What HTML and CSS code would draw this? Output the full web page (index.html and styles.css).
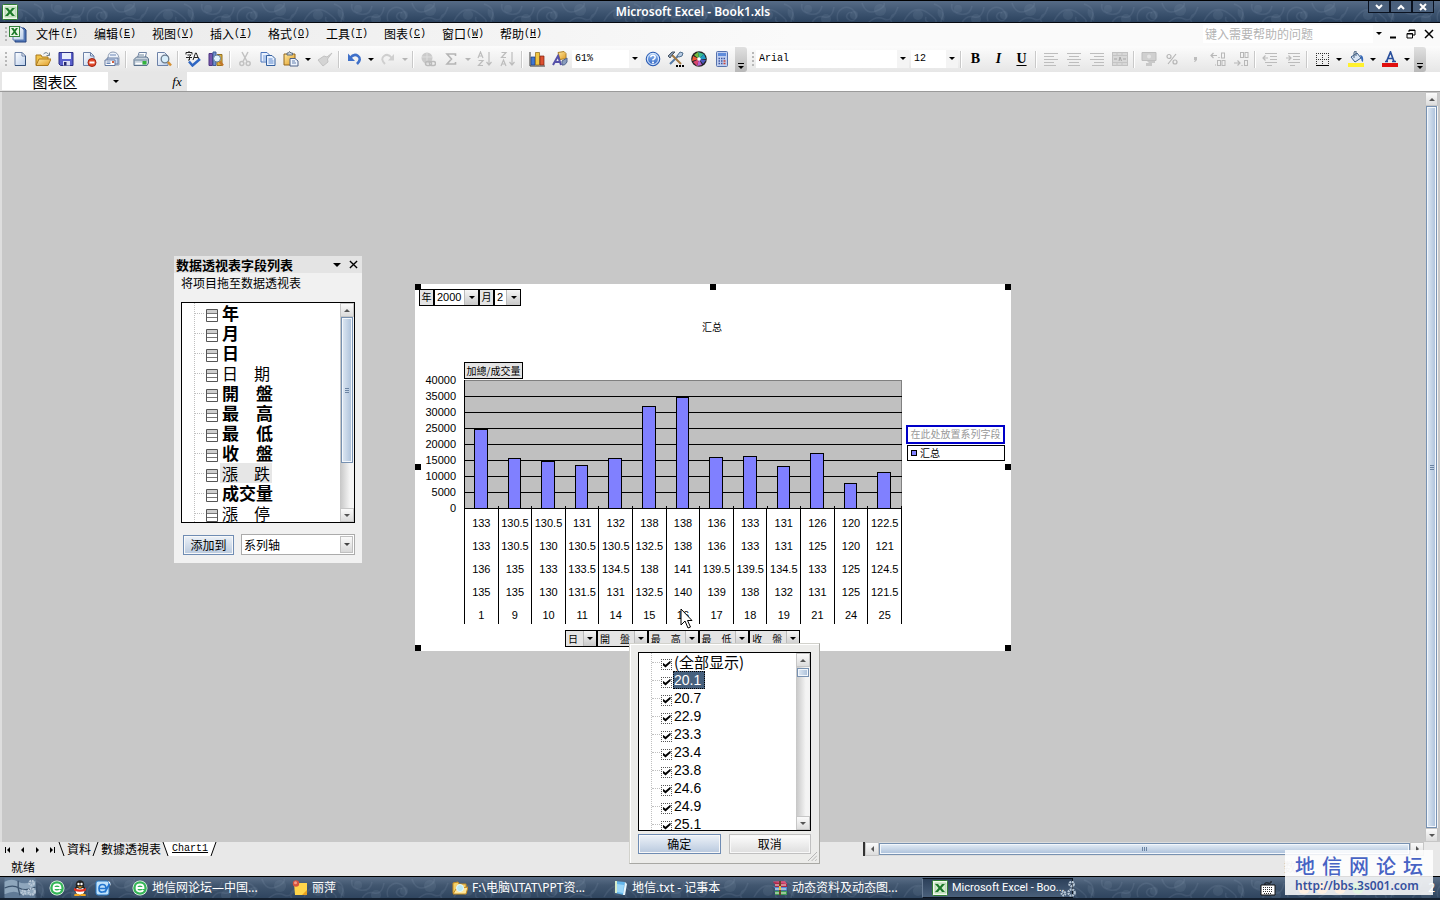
FILE: index.html
```html
<!DOCTYPE html>
<html lang="zh-CN">
<head>
<meta charset="utf-8">
<title>Microsoft Excel - Book1.xls</title>
<link rel="stylesheet" href="styles.css">
</head>
<body>
<svg class="defs" aria-hidden="true">
  <defs>
    <linearGradient id="g-page" x1="0" y1="0" x2="1" y2="1"><stop offset="0" stop-color="#fff"/><stop offset="1" stop-color="#b9cdea"/></linearGradient>
    <linearGradient id="g-gold" x1="0" y1="0" x2="1" y2="1"><stop offset="0" stop-color="#ffe9a0"/><stop offset="1" stop-color="#e09a20"/></linearGradient>
    <linearGradient id="g-blue" x1="0" y1="0" x2="0" y2="1"><stop offset="0" stop-color="#9cc4f5"/><stop offset="1" stop-color="#2a5fc0"/></linearGradient>
    <pattern id="damask" width="150" height="24" patternUnits="userSpaceOnUse">
      <g fill="none" stroke="#a9bbd0" stroke-opacity=".12" stroke-width="1.5">
        <path d="M4 20q10-18 24-8t4 10q-8 0-6-6M34 3q12 4 8 14t8 6M52 3q-2 8 8 10t12-8M62 22q4-8 12-6t10-10M88 20c-4-12 10-18 16-10s-2 12-6 8 2-8 4-6M112 2q4 12 14 8t8-8M118 22q8-8 16-4t14-12M142 22q-4-6 4-10"/>
      </g>
      <g fill="#a9bbd0" fill-opacity=".1"><circle cx="18" cy="14" r="5"/><circle cx="58" cy="8" r="4"/><circle cx="76" cy="18" r="5"/><circle cx="104" cy="14" r="4"/><circle cx="130" cy="9" r="6"/><path d="M38 8q8 2 6 12q-8-4-6-12z"/></g>
    </pattern>
    <symbol id="excel" viewBox="0 0 16 16"><rect x=".5" y=".5" width="15" height="15" rx="1" fill="#f2faee" stroke="#2f7d32"/><rect x="3" y="3" width="11" height="10" fill="#d5ecd0" stroke="#8abb86" stroke-width=".6"/><path d="M3 4h3l2 2.500 2-2.500h3L9.500 8l3.500 4h-3L8 9.500 6 12H3l3.500-4z" fill="#1d7a2a"/></symbol>
    <symbol id="xlbook" viewBox="0 0 18 18"><path d="M6 3h9l2 2v12H6z" fill="#4f79bd" stroke="#27427c"/><path d="M4 2h8l3 3v10H4z" fill="url(#g-page)" stroke="#5b79ae"/><rect x=".5" y="1.500" width="10" height="10" fill="#e9f6e3" stroke="#35823a"/><path d="M2 3h2.500l1 1.800L7 3h2L6.600 6.400 9 10H6.700L5.400 8 4 10H2l2.500-3.600z" fill="#1d7a2a"/></symbol>
    <symbol id="new" viewBox="0 0 16 16"><path d="M3 1.500h7l3.500 3.500v9.500H3z" fill="url(#g-page)" stroke="#6d82a8"/><path d="M10 1.500V5h3.500z" fill="#fff" stroke="#6d82a8"/><path d="M13.500 5v9.500H3" fill="none" stroke="#33507c"/></symbol>
    <symbol id="open" viewBox="0 0 16 16"><path d="M1 14V4h5l1 2h6v3" fill="#f1c34a" stroke="#a9781d"/><path d="M1 14.500 4 8h12l-3 6.500z" fill="url(#g-gold)" stroke="#a9781d"/><path d="M8.500 3q3-3 5 .5M14.500 1.500v3h-3" fill="none" stroke="#6f8190"/></symbol>
    <symbol id="save" viewBox="0 0 16 16"><path d="M1 1.500h14v13H2.500L1 13z" fill="#5a60cc" stroke="#2b2f85"/><rect x="4" y="2" width="9" height="6" fill="#e8edfb"/><rect x="5" y="10" width="7" height="4.500" fill="#dcdff5"/><rect x="6" y="11" width="2.500" height="3.500" fill="#26286e"/></symbol>
    <symbol id="perm" viewBox="0 0 16 16"><path d="M2.500 1.500h7L13 5v9.500H2.500z" fill="url(#g-page)" stroke="#6d82a8"/><path d="M9.500 1.500V5H13" fill="none" stroke="#6d82a8"/><circle cx="11" cy="11.500" r="4" fill="#e2492a" stroke="#a32310"/><path d="M8.500 11.500h5" stroke="#fff" stroke-width="2"/></symbol>
    <symbol id="mail" viewBox="0 0 16 16"><path d="M4 7q0-6 5-6t6 6v7H4z" fill="#eef3fb" stroke="#8d9bb3"/><path d="M3 7h11v6H3z" fill="#c8d7f1" stroke="#6b7ea1"/><path d="M1 9h10v5.500H1z" fill="#fff" stroke="#60779f"/><path d="M2.500 11h4M2.500 12.500h4M6 4h6" stroke="#6c87b5"/><rect x="8" y="10" width="2" height="2" fill="#d06040"/></symbol>
    <symbol id="print" viewBox="0 0 16 16"><path d="M4.500 7 6 1.500h7.500L12 7z" fill="#fff" stroke="#7185a5"/><path d="M1 8.500 3.500 6H14l1.500 2v4L14 14.500H1z" fill="#c9d3dd" stroke="#59708b"/><path d="M1.500 9h13M6 4h5" stroke="#6d859b"/><path d="M2.500 12.500h7" stroke="#fff" stroke-width="1.500"/><rect x="9.500" y="10" width="4" height="3.500" fill="#32b33c"/></symbol>
    <symbol id="preview" viewBox="0 0 16 16"><path d="M1.500 1.500h7L12 5v9.500H1.500z" fill="url(#g-page)" stroke="#6d82a8"/><circle cx="9" cy="8" r="3.800" fill="#d8eefb" stroke="#6b7c8d" stroke-width="1.300"/><path d="m12 11 3 3.500" stroke="#d59135" stroke-width="2.500"/></symbol>
    <symbol id="spell" viewBox="0 0 16 16"><path d="M1 1.500h6M4 0v2M1 1.500v2M7 1.500v2M2.500 4H6L4.500 5.500V9H3M1 6.500h6M8 9l2.500-7h.8L14 9M9 6.500h4.500" fill="none" stroke="#222"/><path d="m4 10.500 3.500 4L15 8" fill="none" stroke="#2f66c2" stroke-width="2.500"/></symbol>
    <symbol id="research" viewBox="0 0 16 16"><path d="M1 2.500h3.500v12H1z" fill="#7656ad" stroke="#4d3580"/><path d="M5 1h3v13.500H5z" fill="#7191ce" stroke="#3c5c99"/><path d="M9 3.500h5v11H9z" fill="#deb13c" stroke="#957020"/><circle cx="9" cy="7.500" r="3.500" fill="#dff2fd" stroke="#66809a"/><path d="m11.500 10.500 3.500 4" stroke="#c2772a" stroke-width="2.400"/></symbol>
    <symbol id="cut" viewBox="0 0 16 16"><path d="M5 1l5 9.500M11 1 6 10.500" stroke="#c2c2c2" stroke-width="1.500"/><circle cx="4.800" cy="12.500" r="2" fill="none" stroke="#c2c2c2" stroke-width="1.500"/><circle cx="11.200" cy="12.500" r="2" fill="none" stroke="#c2c2c2" stroke-width="1.500"/></symbol>
    <symbol id="copy" viewBox="0 0 16 16"><path d="M1 1.500h6l2.500 2.500v7H1z" fill="#e9f1fd" stroke="#4c76bd"/><path d="M3 5h4M3 7h4M3 9h4" stroke="#7ba0dc"/><path d="M6.500 4.500h5.500L15 7.500v7H6.500z" fill="#e9f1fd" stroke="#34609f"/><path d="M8.500 8h4M8.500 10h5M8.500 12h5" stroke="#5b87cc"/></symbol>
    <symbol id="paste" viewBox="0 0 16 16"><path d="M1 3h11v11H1z" fill="url(#g-gold)" stroke="#94661b"/><path d="M4 4V2h1.500L6.500.5 8 2h1.500v2z" fill="#ced6e0" stroke="#5f6e7e"/><path d="M7 7.500h5l3 2.500v5H7z" fill="#edf3fc" stroke="#4f6288"/><path d="M9 10h3M9 12h4" stroke="#6682b0"/></symbol>
    <symbol id="brush" viewBox="0 0 16 16"><path d="m15 2-5 4-3-1-6 4 5 6 5-4-.5-3z" fill="#d4d4d4" stroke="#c2c2c2"/></symbol>
    <symbol id="undo" viewBox="0 0 16 16"><path d="M4 7q4-5 8-2t-1 8" fill="none" stroke="#3f70c9" stroke-width="2.600"/><path d="M2 2.500V10h7z" fill="#3f70c9"/></symbol>
    <symbol id="redo" viewBox="0 0 16 16"><path d="M12 7q-4-5-8-2t1 8" fill="none" stroke="#cfcfcf" stroke-width="2"/><path d="M14 3v6.500H8z" fill="#cfcfcf"/></symbol>
    <symbol id="link" viewBox="0 0 16 16"><circle cx="7" cy="7" r="5.500" fill="#cbcbcb"/><path d="M2 6h10M7 2v10" stroke="#dedede"/><rect x="5.500" y="10.500" width="6" height="4" rx="2" fill="none" stroke="#bbb" stroke-width="1.500"/><rect x="9.500" y="10.500" width="6" height="4" rx="2" fill="none" stroke="#bbb" stroke-width="1.500"/></symbol>
    <symbol id="sum" viewBox="0 0 16 16"><path d="M12.500 5V3H4l4.500 5L4 13h8.500v-2" fill="none" stroke="#b5b5b5" stroke-width="1.600"/></symbol>
    <symbol id="sort" viewBox="0 0 16 16"><path d="m1 7 2.500-6L6 7M2 5h3M1.500 9.500H6l-4.500 5H6M12 1v12M9.500 11l2.500 3 2.500-3" fill="none" stroke="#bdbdbd" stroke-width="1.200"/></symbol>
    <symbol id="sortd" viewBox="0 0 16 16"><path d="M1.500 1.500H6l-4.500 5H6M1 15l2.500-6L6 15M2 13h3M12 1v12M9.500 11l2.500 3 2.500-3" fill="none" stroke="#bdbdbd" stroke-width="1.200"/></symbol>
    <symbol id="chart" viewBox="0 0 16 16"><path d="M1 1v14h15" fill="none" stroke="#333"/><path d="M2 6h4v8H2z" fill="#4077cf" stroke="#1d3c80" stroke-width=".7"/><path d="M6.500 1.500h4V14h-4z" fill="#f0c642" stroke="#8c6410" stroke-width=".7"/><path d="M11 5h4v9h-4z" fill="#dc5030" stroke="#7d200e" stroke-width=".7"/></symbol>
    <symbol id="draw" viewBox="0 0 16 16"><path d="m6 1.500 6-1 2 2v5l-6 1z" fill="url(#g-gold)" stroke="#ad802a"/><path d="m10 10 5-3v4q-2 4-5 3z" fill="#8a9cbd" stroke="#50648c"/><path d="m1 14 5-9 3 9M3 11h5" fill="none" stroke="#5550a8" stroke-width="2"/></symbol>
    <symbol id="help" viewBox="0 0 16 16"><circle cx="8" cy="8" r="6.800" fill="url(#g-blue)" stroke="#2a5ab0"/><circle cx="8" cy="8" r="5.500" fill="none" stroke="#e5f0ff"/><path d="M5.700 6.300q.2-2 2.300-2t2.200 1.800T8 8.800v.7" fill="none" stroke="#fff" stroke-width="1.500"/><circle cx="8" cy="11.500" r="1" fill="#fff"/></symbol>
    <symbol id="tools" viewBox="0 0 16 16"><path d="m2 13 10-10" stroke="#557ba8" stroke-width="2"/><path d="m9 5 3-4 3 1-1 3-3 1z" fill="#b9cce3" stroke="#52708f"/><path d="m4 4 9 9" stroke="#a07843" stroke-width="2"/><path d="m0 5 4-4h3L4 4 2 7z" fill="#8a9aae" stroke="#4a5767"/><path d="M8 15h2M11 15h2M14 15h2" stroke="#000" stroke-width="2"/></symbol>
    <symbol id="wheel" viewBox="0 0 16 16"><circle cx="8" cy="8" r="7.800" fill="#222"/><path d="M8 8 7 1l6 2z" fill="#39bd92"/><path d="m8 8 5-5 2 5z" fill="#219bc5"/><path d="m8 8 7 1-3 4z" fill="#4d58bd"/><path d="m8 8 3 6-5 1z" fill="#b65fca"/><path d="m8 8-2 7-4-4z" fill="#db446e"/><path d="M8 8 1 10l1-5z" fill="#ef5934"/><path d="M8 8 3 4l4-3z" fill="#77ba3c"/><circle cx="8" cy="8" r="1.800" fill="#fff"/></symbol>
    <symbol id="calc" viewBox="0 0 16 16"><rect x="2.500" y=".5" width="11" height="15" rx="1" fill="#c0cff0" stroke="#5672ad"/><rect x="4" y="2" width="8" height="3" fill="#5f8cdb"/><path d="M4.500 7.500h2M7 7.500h2M9.500 7.500h2M4.500 10h2M7 10h2M4.500 12.500h2M7 12.500h2" stroke="#3e57a1" stroke-width="1.500" stroke-dasharray="1.500 .5"/><path d="M9.500 10h2M9.500 12.500h2" stroke="#c84337" stroke-width="1.500"/></symbol>
    <symbol id="al" viewBox="0 0 16 16"><path d="M1 2.500h14M1 5.500h10M1 8.500h14M1 11.500h10M1 14.500h12" stroke="#bdbdbd"/></symbol>
    <symbol id="ac" viewBox="0 0 16 16"><path d="M1 2.500h14M3 5.500h10M1 8.500h14M3 11.500h10M2 14.500h12" stroke="#bdbdbd"/></symbol>
    <symbol id="ar" viewBox="0 0 16 16"><path d="M1 2.500h14M5 5.500h10M1 8.500h14M5 11.500h10M3 14.500h12" stroke="#bdbdbd"/></symbol>
    <symbol id="merge" viewBox="0 0 16 16"><rect x=".5" y="1.500" width="15" height="13" fill="#d8d8d8" stroke="#c2c2c2"/><path d="M1 4.500h14M1 11.500h14M5 1v3M10 1v3M5 12v3M10 12v3" stroke="#c4c4c4"/><path d="M2 8h3M11 8h3M7 10l1-4 1.500 4" stroke="#a5a5a5" fill="none"/></symbol>
    <symbol id="money" viewBox="0 0 16 16"><path d="M1 1.500h14v8H1z" fill="#d0d0d0" stroke="#bebebe"/><circle cx="8" cy="5.500" r="2" fill="#e5e5e5"/><path d="M6 10h8v2H8zM5 12h6v3H5z" fill="#c8c8c8"/></symbol>
    <symbol id="pct" viewBox="0 0 16 16"><path d="M12 3 4 13" stroke="#b5b5b5" stroke-width="1.200"/><circle cx="5" cy="5.500" r="2" fill="none" stroke="#b5b5b5" stroke-width="1.200"/><circle cx="11" cy="11" r="2" fill="none" stroke="#b5b5b5" stroke-width="1.200"/></symbol>
    <symbol id="comma" viewBox="0 0 16 16"><path d="M7 6h3v3l-2 2H7l1-2H7z" fill="#bdbdbd"/></symbol>
    <symbol id="incd" viewBox="0 0 16 16"><path d="M1 4.500h6M3.500 2 1 4.500 3.500 7M9 6v1" fill="none" stroke="#b8b8b8" stroke-width="1.200"/><g fill="none" stroke="#b8b8b8"><rect x="11.500" y="2" width="3" height="5"/><rect x="7.500" y="9.500" width="3" height="5"/><rect x="12" y="9.500" width="3" height="5"/></g><path d="M5 14h1" stroke="#b8b8b8"/></symbol>
    <symbol id="decd" viewBox="0 0 16 16"><path d="M1 12h6M4.500 9.500 7 12l-2.500 2.500M9 14v1" fill="none" stroke="#b8b8b8" stroke-width="1.200"/><g fill="none" stroke="#b8b8b8"><rect x="11.500" y="9.500" width="3" height="5"/><rect x="7.500" y="1.500" width="3" height="5"/><rect x="12" y="1.500" width="3" height="5"/></g></symbol>
    <symbol id="outd" viewBox="0 0 16 16"><path d="M3 2.500h12M8 5.500h7M8 8.500h7M3 11.500h12M5 14.500h5M6 7H1M3.500 4.500 1 7l2.500 2.500" fill="none" stroke="#bcbcbc" stroke-width="1.200"/></symbol>
    <symbol id="ind" viewBox="0 0 16 16"><path d="M3 2.500h12M8 5.500h7M8 8.500h7M3 11.500h12M5 14.500h5M1 7h5M3.500 4.500 6 7 3.500 9.500" fill="none" stroke="#bcbcbc" stroke-width="1.200"/></symbol>
    <symbol id="border" viewBox="0 0 16 16"><path d="M2.500 2v12M8.500 2v12M14.500 2v12M2 2.500h13M2 8.500h13" stroke="#333" stroke-dasharray="1 1"/><path d="M2 14.500h13" stroke="#000"/></symbol>
    <symbol id="fill" viewBox="0 0 16 16"><path d="m3 6 6-4 4 5-6 4z" fill="#dbe7f5" stroke="#395b88"/><path d="M6 7V2q0-2 2-2v5" fill="none" stroke="#46617f"/><path d="M12 4q4 0 3 7-2-1-2-4z" fill="#3568b8"/><path d="M0 12h16v4H0z" fill="#fff12e"/></symbol>
    <symbol id="fcolor" viewBox="0 0 16 16"><path d="M3 10.500h3M10 10.500h4M4.500 10.500 8.500 1l3.500 9.500M6 7.500h5" fill="none" stroke="#294f9c" stroke-width="1.700"/><path d="M0 12h16v4H0z" fill="#e01010"/></symbol>
    <symbol id="field" viewBox="0 0 12 13"><path d="M.5.500h11v12H.5z" fill="#fff" stroke="#555"/><path d="M1 1h10v3H1z" fill="#cfcfcf"/><path d="M1 4.500h10M1 8.500h10" stroke="#777"/></symbol>
    <symbol id="ie" viewBox="0 0 16 16"><circle cx="8" cy="8" r="7.500" fill="#eefaf0"/><circle cx="8" cy="8" r="6.800" fill="#35b558"/><path d="M4.500 8h7q0-3.500-3.500-3.500T4.500 8t3.500 3.500q2.500 0 3.200-1.500" fill="none" stroke="#fff" stroke-width="1.800"/></symbol>
    <symbol id="qq" viewBox="0 0 16 16"><ellipse cx="8" cy="10" rx="5.500" ry="5" fill="#222"/><ellipse cx="8" cy="11" rx="4.500" ry="4" fill="#fff"/><circle cx="8" cy="4.500" r="4.300" fill="#222"/><circle cx="6.500" cy="4" r="1.200" fill="#fff"/><circle cx="9.500" cy="4" r="1.200" fill="#fff"/><path d="M5 6.500h6L8 8z" fill="#f3a620"/><path d="M2 8q6 3 12 0v2.500q-6 2.500-12 0z" fill="#e8301f"/><ellipse cx="5" cy="15" rx="3" ry="1.300" fill="#f3a620"/><ellipse cx="11" cy="15" rx="3" ry="1.300" fill="#f3a620"/></symbol>
    <symbol id="desk" viewBox="0 0 16 16"><rect x="1" y="1" width="13" height="14" rx="2" fill="#bfe2fb" stroke="#2675bf"/><path d="M4 8.500h7q0-4-3.500-4T4 8.500 7.500 12q2.500 0 3.500-1.500M10 12l5-9" fill="none" stroke="#2376cf" stroke-width="1.700"/><path d="m13 1 2 1 1 4z" fill="#fff"/></symbol>
    <symbol id="note" viewBox="0 0 16 16"><path d="M2 3h13v12H3z" fill="#ffd54a"/><path d="m10 15 5-5v5z" fill="#e8a020"/><circle cx="4" cy="3.500" r="3.200" fill="#d65440"/><circle cx="3.500" cy="2.800" r="1.500" fill="#f49c86"/></symbol>
    <symbol id="folder" viewBox="0 0 16 16"><path d="M1 13V3l5-1 1 2h7v9z" fill="#f4d169" stroke="#c58d22"/><path d="m1 14 3-5 12-2-2 7z" fill="#ffe79b" stroke="#c58d22"/><circle cx="8" cy="8" r="3.500" fill="#b9e8f1" stroke="#e6f8ff"/></symbol>
    <symbol id="pad" viewBox="0 0 16 16"><path d="m3 1 10 1-1 13-9-2z" fill="#63b5ea"/><path d="m5 4 7 1-1 8-6-1z" fill="#9ad6f8"/><path d="M13 2l2 2-2 11h-2z" fill="#e8f5fb"/><path d="M3 1h2v12H3z" fill="#d5ecc9"/></symbol>
    <symbol id="rar" viewBox="0 0 16 16"><path d="M1 1.500 13 1l2 3H3z" fill="#d8527b"/><path d="M1 2l2 2v3H15V4" fill="#a72649"/><path d="m1 6 2 2v2.500h12V7H3z" fill="#4d8bd8"/><path d="m1 10 2 1.500V15h12v-4H3z" fill="#3f9c55"/><path d="M3 5h11M3 9h11M3 13h11" stroke="#f4f0e0"/><path d="M7 1h2v14H7z" fill="#6b432a"/><path d="M7 6h2v4H7z" fill="#e4bb48"/></symbol>
    <symbol id="gears" viewBox="0 0 20 20"><g fill="none" stroke="#bac9d8" stroke-width="2.500"><circle cx="14" cy="4.500" r="2.500" stroke-dasharray="2 .7"/><circle cx="5" cy="15" r="2" stroke-dasharray="1.600 .7"/><circle cx="14" cy="14" r="3.500" stroke-dasharray="2 .8"/></g></symbol>
    <symbol id="flag" viewBox="0 0 34 22"><path d="M0 0h34v22H0z" fill="#607a96"/><path d="M0 4Q8 0 15 4t19-1v14q-10 4-17 0T0 18z" fill="#8ea6bc"/><path d="M15 3q-1 8 2 16M0 11q9-4 16 0t18-1" fill="none" stroke="#3c536d" stroke-width="1.500"/></symbol>
    <symbol id="kbd" viewBox="0 0 16 16"><path d="M5 5q-1-3 3-2t3-2" fill="none" stroke="#111"/><path d="M1 5h14v10H1z" fill="#fff" stroke="#111"/><path d="M3 7.500h10M3 9.500h10M3 11.500h10M4 13.500h8" stroke="#333" stroke-dasharray="1 1"/></symbol>
  </defs>
</svg>

<header class="titlebar">
  <svg class="texture" aria-hidden="true"><rect width="100%" height="100%" fill="url(#damask)"/></svg>
  <svg class="ico title-ico"><use href="#excel"/></svg>
  <h1 class="title">Microsoft Excel - Book1.xls</h1>
  <div class="winbtns">
    <button aria-label="最小化"><svg viewBox="0 0 8 8"><path d="m1 2 3 3 3-3"/></svg></button>
    <button aria-label="最大化"><svg viewBox="0 0 8 8"><path d="m1 6 3-3 3 3"/></svg></button>
    <button aria-label="关闭"><svg viewBox="0 0 8 8"><path d="m1 1 6 6M7 1 1 7"/></svg></button>
  </div>
</header>

<nav class="menubar">
  <span class="grip"></span>
  <svg class="book-ico"><use href="#xlbook"/></svg>
  <button class="menu">文件<span class="lat">(<u>F</u>)</span></button>
  <button class="menu">编辑<span class="lat">(<u>E</u>)</span></button>
  <button class="menu">视图<span class="lat">(<u>V</u>)</span></button>
  <button class="menu">插入<span class="lat">(<u>I</u>)</span></button>
  <button class="menu">格式<span class="lat">(<u>O</u>)</span></button>
  <button class="menu">工具<span class="lat">(<u>T</u>)</span></button>
  <button class="menu">图表<span class="lat">(<u>C</u>)</span></button>
  <button class="menu">窗口<span class="lat">(<u>W</u>)</span></button>
  <button class="menu">帮助<span class="lat">(<u>H</u>)</span></button>
  <input class="ask" type="text" aria-label="帮助问题" placeholder="键入需要帮助的问题">
  <button class="dd" aria-label="展开"></button>
  <div class="docbtns">
    <button aria-label="最小化窗口"><svg viewBox="0 0 10 10"><path d="M2 8.500h6" stroke-width="2"/></svg></button>
    <button aria-label="还原窗口"><svg viewBox="0 0 10 10"><path d="M3 3V1h6v5H7M1 4.500h5.500v4.500H1zM3 1.500h6M1 5h6"/></svg></button>
    <button aria-label="关闭窗口"><svg viewBox="0 0 10 10"><path d="m1 1 8 8M9 1 1 9" stroke-width="1.500"/></svg></button>
  </div>
</nav>

<div class="toolbar">
  <span class="grip"></span>
  <button class="tb" aria-label="新建"><svg class="ico"><use href="#new"/></svg></button>
  <button class="tb" aria-label="打开"><svg class="ico"><use href="#open"/></svg></button>
  <button class="tb" aria-label="保存"><svg class="ico"><use href="#save"/></svg></button>
  <button class="tb" aria-label="权限"><svg class="ico"><use href="#perm"/></svg></button>
  <button class="tb" aria-label="电子邮件"><svg class="ico"><use href="#mail"/></svg></button>
  <span class="sep"></span>
  <button class="tb" aria-label="打印"><svg class="ico"><use href="#print"/></svg></button>
  <button class="tb" aria-label="打印预览"><svg class="ico"><use href="#preview"/></svg></button>
  <span class="sep"></span>
  <button class="tb" aria-label="拼写检查"><svg class="ico"><use href="#spell"/></svg></button>
  <button class="tb" aria-label="信息检索"><svg class="ico"><use href="#research"/></svg></button>
  <span class="sep"></span>
  <button class="tb" aria-label="剪切"><svg class="ico"><use href="#cut"/></svg></button>
  <button class="tb" aria-label="复制"><svg class="ico"><use href="#copy"/></svg></button>
  <button class="tb" aria-label="粘贴"><svg class="ico"><use href="#paste"/></svg></button>
  <button class="dd" aria-label="粘贴选项"></button>
  <button class="tb" aria-label="格式刷"><svg class="ico"><use href="#brush"/></svg></button>
  <span class="sep"></span>
  <button class="tb" aria-label="撤消"><svg class="ico"><use href="#undo"/></svg></button>
  <button class="dd" aria-label="撤消列表"></button>
  <button class="tb" aria-label="恢复"><svg class="ico"><use href="#redo"/></svg></button>
  <button class="dd off" aria-label="恢复列表"></button>
  <span class="sep"></span>
  <button class="tb" aria-label="超链接"><svg class="ico"><use href="#link"/></svg></button>
  <button class="tb" aria-label="自动求和"><svg class="ico"><use href="#sum"/></svg></button>
  <button class="dd off" aria-label="求和选项"></button>
  <button class="tb" aria-label="升序"><svg class="ico"><use href="#sort"/></svg></button>
  <button class="tb" aria-label="降序"><svg class="ico"><use href="#sortd"/></svg></button>
  <span class="sep"></span>
  <button class="tb" aria-label="图表向导"><svg class="ico"><use href="#chart"/></svg></button>
  <button class="tb" aria-label="绘图"><svg class="ico"><use href="#draw"/></svg></button>
  <span class="combo zoom"><select aria-label="显示比例"><option>61%</option></select><i class="arrow"></i></span>
  <button class="tb" aria-label="帮助"><svg class="ico"><use href="#help"/></svg></button>
  <button class="tb" aria-label="工具"><svg class="ico"><use href="#tools"/></svg></button>
  <button class="tb" aria-label="颜色"><svg class="ico"><use href="#wheel"/></svg></button>
  <button class="tb" aria-label="计算器"><svg class="ico"><use href="#calc"/></svg></button>
  <button class="more" aria-label="工具栏选项"></button>
  <span class="grip"></span>
  <span class="combo font"><select aria-label="字体"><option>Arial</option></select><i class="arrow"></i></span>
  <span class="combo size"><select aria-label="字号"><option>12</option></select><i class="arrow"></i></span>
  <span class="sep"></span>
  <button class="tb letter"><b>B</b></button>
  <button class="tb letter"><i>I</i></button>
  <button class="tb letter"><u>U</u></button>
  <span class="sep"></span>
  <button class="tb" aria-label="左对齐"><svg class="ico"><use href="#al"/></svg></button>
  <button class="tb" aria-label="居中"><svg class="ico"><use href="#ac"/></svg></button>
  <button class="tb" aria-label="右对齐"><svg class="ico"><use href="#ar"/></svg></button>
  <button class="tb" aria-label="合并及居中"><svg class="ico"><use href="#merge"/></svg></button>
  <span class="sep"></span>
  <button class="tb" aria-label="货币样式"><svg class="ico"><use href="#money"/></svg></button>
  <button class="tb" aria-label="百分比样式"><svg class="ico"><use href="#pct"/></svg></button>
  <button class="tb" aria-label="千位分隔"><svg class="ico"><use href="#comma"/></svg></button>
  <button class="tb" aria-label="增加小数位数"><svg class="ico"><use href="#incd"/></svg></button>
  <button class="tb" aria-label="减少小数位数"><svg class="ico"><use href="#decd"/></svg></button>
  <span class="sep"></span>
  <button class="tb" aria-label="减少缩进量"><svg class="ico"><use href="#outd"/></svg></button>
  <button class="tb" aria-label="增加缩进量"><svg class="ico"><use href="#ind"/></svg></button>
  <span class="sep"></span>
  <button class="tb" aria-label="边框"><svg class="ico"><use href="#border"/></svg></button>
  <button class="dd" aria-label="边框选项"></button>
  <button class="tb" aria-label="填充颜色"><svg class="ico"><use href="#fill"/></svg></button>
  <button class="dd" aria-label="填充颜色选项"></button>
  <button class="tb" aria-label="字体颜色"><svg class="ico"><use href="#fcolor"/></svg></button>
  <button class="dd" aria-label="字体颜色选项"></button>
  <button class="more" aria-label="工具栏选项"></button>
</div>

<div class="formula">
  <input class="namebox" type="text" aria-label="名称框" value="图表区">
  <button class="dd" aria-label="名称列表"></button>
  <button class="fx">fx</button>
  <input class="fbar" type="text" aria-label="编辑栏">
</div>

<main class="work">
  <div class="vscroll main-scroll"><button class="sb up" aria-label="向上"></button><span class="thumb"></span><button class="sb down" aria-label="向下"></button></div>

  <section class="fields">
    <div class="fields-head"><h2>数据透视表字段列表</h2><button class="dd" aria-label="选项"></button><button class="close" aria-label="关闭"><svg viewBox="0 0 10 10"><path d="m1 1 8 8M9 1 1 9"/></svg></button></div>
    <p>将项目拖至数据透视表</p>
    <div class="listbox">
      <ul class="tree">
        <li class="used"><svg class="fico"><use href="#field"/></svg><span>年</span></li>
        <li class="used"><svg class="fico"><use href="#field"/></svg><span>月</span></li>
        <li class="used"><svg class="fico"><use href="#field"/></svg><span>日</span></li>
        <li><svg class="fico"><use href="#field"/></svg><span>日　期</span></li>
        <li class="used"><svg class="fico"><use href="#field"/></svg><span>開　盤</span></li>
        <li class="used"><svg class="fico"><use href="#field"/></svg><span>最　高</span></li>
        <li class="used"><svg class="fico"><use href="#field"/></svg><span>最　低</span></li>
        <li class="used"><svg class="fico"><use href="#field"/></svg><span>收　盤</span></li>
        <li class="picked"><svg class="fico"><use href="#field"/></svg><span>漲　跌</span></li>
        <li class="used"><svg class="fico"><use href="#field"/></svg><span>成交量</span></li>
        <li><svg class="fico"><use href="#field"/></svg><span>漲　停</span></li>
      </ul>
      <div class="vscroll"><button class="sb up" aria-label="向上"></button><span class="thumb"></span><span class="rest"></span><button class="sb down" aria-label="向下"></button></div>
    </div>
    <div class="fields-foot"><button class="push hot">添加到</button><span class="combo axis"><select aria-label="目标区域"><option>系列轴</option></select><i class="arrow"></i></span></div>
  </section>

  <section class="sheet">
    <i class="h tl"></i><i class="h tm"></i><i class="h tr"></i><i class="h ml"></i><i class="h mr"></i><i class="h bl"></i><i class="h br"></i>
    <div class="pagefields">
      <button class="pf">年</button><span class="combo year"><select aria-label="年"><option>2000</option></select><i class="arrow"></i></span>
      <button class="pf">月</button><span class="combo month"><select aria-label="月"><option>2</option></select><i class="arrow"></i></span>
    </div>
    <h2 class="chart-title">汇总</h2>
    <button class="measure">加總/成交量</button>
    <div class="chart">
      <ol class="yaxis"><li>40000</li><li>35000</li><li>30000</li><li>25000</li><li>20000</li><li>15000</li><li>10000</li><li>5000</li><li>0</li></ol>
      <div class="plot">
        <svg class="bars" viewBox="0 0 438 129" preserveAspectRatio="none" role="img" aria-label="成交量">
          <path d="M0 0h438v129H0z" fill="#c0c0c0"/>
          <path d="M0 .5h437.500V129" fill="none" stroke="#808080"/>
          <path d="M0 16.500h438M0 32.500h438M0 48.500h438M0 64.500h438M0 80.500h438M0 96.500h438M0 112.500h438" stroke="#000"/>
          <g fill="#8080ff" stroke="#000">
            <path d="M10.500 49.500h13v79h-13zM44.500 78.500h12v50h-12zM77.500 81.500h13v47h-13zM111.500 85.500h12v43h-12zM144.500 78.500h13v50h-13zM178.500 26.500h13v102h-13zM212.500 17.500h12v111h-12zM245.500 77.500h13v51h-13zM279.500 76.500h13v52h-13zM313.500 86.500h12v42h-12zM346.500 73.500h13v55h-13zM380.500 103.500h12v25h-12zM413.500 92.500h13v36h-13z"/>
          </g>
          <path d="M0 128.500h438M.5 0v129" stroke="#000"/>
          <path d="M34.500 126v3M67.500 126v3M101.500 126v3M134.500 126v3M168.500 126v3M202.500 126v3M235.500 126v3M269.500 126v3M303.500 126v3M336.500 126v3M370.500 126v3M403.500 126v3M437.500 126v3" stroke="#000"/>
        </svg>
        <table class="cats">
          <tr><td>133</td><td>130.5</td><td>130.5</td><td>131</td><td>132</td><td>138</td><td>138</td><td>136</td><td>133</td><td>131</td><td>126</td><td>120</td><td>122.5</td></tr>
          <tr><td>133</td><td>130.5</td><td>130</td><td>130.5</td><td>130.5</td><td>132.5</td><td>138</td><td>136</td><td>133</td><td>131</td><td>125</td><td>120</td><td>121</td></tr>
          <tr><td>136</td><td>135</td><td>133</td><td>133.5</td><td>134.5</td><td>138</td><td>141</td><td>139.5</td><td>139.5</td><td>134.5</td><td>133</td><td>125</td><td>124.5</td></tr>
          <tr><td>135</td><td>135</td><td>130</td><td>131.5</td><td>131</td><td>132.5</td><td>140</td><td>139</td><td>138</td><td>132</td><td>131</td><td>125</td><td>121.5</td></tr>
          <tr><td>1</td><td>9</td><td>10</td><td>11</td><td>14</td><td>15</td><td>16</td><td>17</td><td>18</td><td>19</td><td>21</td><td>24</td><td>25</td></tr>
        </table>
      </div>
      <div class="legend"><div class="drop">在此处放置系列字段</div><div class="key"><i></i>汇总</div></div>
    </div>
    <div class="catfields">
      <button class="cf day"><span>日</span><i class="arrow"></i></button><button class="cf"><span>開　盤</span><i class="arrow"></i></button><button class="cf"><span>最　高</span><i class="arrow"></i></button><button class="cf"><span>最　低</span><i class="arrow"></i></button><button class="cf"><span>收　盤</span><i class="arrow"></i></button>
    </div>
  </section>

  <form class="popup">
    <div class="listbox">
      <ul class="tree">
        <li><label><input type="checkbox" checked><span class="cjk">(全部显示)</span></label></li>
        <li><label><input type="checkbox" checked><span class="sel">20.1</span></label></li>
        <li><label><input type="checkbox" checked><span>20.7</span></label></li>
        <li><label><input type="checkbox" checked><span>22.9</span></label></li>
        <li><label><input type="checkbox" checked><span>23.3</span></label></li>
        <li><label><input type="checkbox" checked><span>23.4</span></label></li>
        <li><label><input type="checkbox" checked><span>23.8</span></label></li>
        <li><label><input type="checkbox" checked><span>24.6</span></label></li>
        <li><label><input type="checkbox" checked><span>24.9</span></label></li>
        <li><label><input type="checkbox" checked><span>25.1</span></label></li>
      </ul>
      <div class="vscroll"><button type="button" class="sb up" aria-label="向上"></button><span class="thumb"></span><span class="rest"></span><button type="button" class="sb down" aria-label="向下"></button></div>
    </div>
    <div class="popup-foot"><button type="button" class="push hot">确定</button><button type="button" class="push">取消</button></div>
    <svg class="resize" viewBox="0 0 10 10"><path d="M0 10 10 0M4 10l6-6M8 10l2-2" stroke="#b0b0b0"/></svg>
  </form>

  <svg class="cursor" viewBox="0 0 13 21"><path d="M1 1v16l4-4 3 7 2.500-1-3-6.500H12z" fill="#fff" stroke="#000"/></svg>
</main>

<div class="tabs">
  <div class="tabnav">
    <button aria-label="第一张"><svg viewBox="0 0 8 8"><path d="M1.500 1v6" stroke="#000"/><path d="M6 1v6L3 4z"/></svg></button>
    <button aria-label="上一张"><svg viewBox="0 0 8 8"><path d="M5 1v6L2 4z"/></svg></button>
    <button aria-label="下一张"><svg viewBox="0 0 8 8"><path d="M3 1v6l3-3z"/></svg></button>
    <button aria-label="最后一张"><svg viewBox="0 0 8 8"><path d="M6.500 1v6" stroke="#000"/><path d="M2 1v6l3-3z"/></svg></button>
  </div>
  <svg class="slash" viewBox="0 0 8 14"><path d="m1 0 5 14"/></svg>
  <button class="tab">資料</button>
  <svg class="slash" viewBox="0 0 8 14"><path d="M6 0 1 14"/></svg>
  <button class="tab">數據透視表</button>
  <svg class="slash on" viewBox="0 0 8 14"><path class="bg" d="M1 0h7v14H6z"/><path d="m1 0 5 14"/></svg>
  <button class="tab active">Chart1</button>
  <svg class="slash on" viewBox="0 0 8 14"><path class="bg" d="M0 0h6L1 14H0z"/><path d="M6 0 1 14"/></svg>
  <div class="hscroll"><button class="sb left" aria-label="向左"></button><span class="thumb"></span><button class="sb right" aria-label="向右"></button></div>
</div>

<footer class="status"><span>就绪</span><span class="num">数字</span></footer>

<div class="taskbar">
  <svg class="texture" aria-hidden="true"><rect width="100%" height="100%" fill="url(#damask)"/></svg>
  <button class="start" aria-label="开始"><svg class="flag"><use href="#flag"/></svg><svg class="gear"><use href="#gears"/></svg></button>
  <div class="quick">
    <button aria-label="浏览器"><svg class="ico"><use href="#ie"/></svg></button>
    <button aria-label="QQ"><svg class="ico"><use href="#qq"/></svg></button>
    <button aria-label="桌面"><svg class="ico"><use href="#desk"/></svg></button>
  </div>
  <button class="task"><svg class="ico"><use href="#ie"/></svg><span>地信网论坛—中国...</span></button>
  <button class="task"><svg class="ico"><use href="#note"/></svg><span>丽萍</span></button>
  <button class="task"><svg class="ico"><use href="#folder"/></svg><span>F:\电脑\ITAT\PPT资...</span></button>
  <button class="task"><svg class="ico"><use href="#pad"/></svg><span>地信.txt - 记事本</span></button>
  <button class="task"><svg class="ico"><use href="#rar"/></svg><span>动态资料及动态图...</span></button>
  <button class="task on"><svg class="ico"><use href="#excel"/></svg><span>Microsoft Excel - Boo...</span><svg class="gear"><use href="#gears"/></svg></button>
  <div class="tray"><svg class="ico"><use href="#kbd"/></svg><i class="dot o"></i><i class="dot o"></i><i class="dot o"></i><i class="dot g"></i><span>2</span></div>
</div>

<aside class="mark"><strong>地信网论坛</strong><span>http://bbs.3s001.com</span></aside>
</body>
</html>
```
FILE: styles.css
```css
* { box-sizing: border-box; }

html, body { height: 100%; }

body {
  margin: 0;
  display: flex;
  flex-direction: column;
  overflow: hidden;
  position: relative;
  background: #e8e8e8;
  color: #000;
  font: 12px/16px "Noto Sans CJK SC", sans-serif;
}

button, input, select {
  font: inherit;
  color: inherit;
  margin: 0;
  padding: 0;
  border: 0;
  border-radius: 0;
  background: none;
  outline: 0;
}

select { appearance: none; min-width: 0; }
button { display: flex; align-items: center; justify-content: center; white-space: nowrap; }
h1, h2, p, ul, ol { margin: 0; padding: 0; list-style: none; font-weight: normal; }
.defs { position: absolute; width: 0; height: 0; }
.ico { width: 16px; height: 16px; flex: none; }
.lat { font: 10px/16px "Liberation Mono", monospace; }
.texture { position: absolute; inset: 0; width: 100%; height: 100%; }

/* title bar */
.titlebar {
  position: relative;
  flex: none;
  display: flex;
  align-items: center;
  height: 23px;
  padding-right: 6px;
  border-top: 1px solid #000;
  border-bottom: 1px solid #05080f;
  background: linear-gradient(#566b86, #3f5672 50%, #2c435f);
}
.title-ico { position: relative; margin-left: 2px; }
.title {
  position: relative;
  flex: 1;
  text-align: center;
  color: #fff;
  font: 600 12px/20px "Noto Sans", sans-serif;
}
.winbtns { position: relative; display: flex; align-self: flex-start; }
.winbtns button {
  width: 22px;
  height: 12px;
  border: 1px solid #0a1220;
  border-top: 0;
  background: #4a607c;
}
.winbtns svg { width: 8px; height: 8px; fill: none; stroke: #fff; stroke-width: 2; }

/* menus */
.menubar {
  flex: none;
  display: flex;
  align-items: center;
  height: 23px;
  padding: 0 5px 2px 0;
  background: linear-gradient(90deg, #e9e9e9, #fafafa 55%);
}
.grip {
  flex: none;
  width: 2px;
  height: 14px;
  margin: 0 1px 0 5px;
  background: repeating-linear-gradient(#b8b8b8 0 2px, transparent 2px 4px);
}
.book-ico { width: 18px; height: 18px; margin: 0 1px; }
.menu { width: 58px; padding: 0; }
.ask {
  width: 170px;
  height: 18px;
  margin-left: auto;
  padding: 0 2px;
  background: #fff;
}
.ask::placeholder { color: #b4b4b4; opacity: 1; }
.dd { flex: none; width: 11px; height: 18px; }
.dd::before, .arrow::before {
  content: "";
  border: 3px solid transparent;
  border-top-color: currentColor;
  border-bottom: 0;
}
.dd.off { color: #b5b5b5; }
.docbtns { display: flex; gap: 6px; margin-left: 3px; }
.docbtns button { width: 12px; height: 16px; }
.docbtns svg { width: 10px; height: 10px; fill: none; stroke: #000; }

/* tool bars */
.toolbar {
  flex: none;
  display: flex;
  align-items: center;
  height: 26px;
  background: linear-gradient(#fcfcfc, #e6e6e6);
}
.tb { flex: none; width: 23px; height: 24px; }
.sep { flex: none; width: 2px; height: 17px; margin: 0 2px; border-left: 1px solid #c9c9c9; border-right: 1px solid #fff; }
.letter { font: 700 14px/20px "Liberation Serif", serif; }
.letter u { text-underline-offset: 2px; }
.combo { flex: none; display: flex; background: #fff; }
.combo select { flex: 1; }
.arrow { flex: none; display: flex; align-items: center; justify-content: center; width: 12px; pointer-events: none; }
.toolbar .combo { height: 18px; margin-bottom: 1px; font: 10px/16px "Liberation Mono", monospace; }
.toolbar .combo select { padding: 0 3px; }
.toolbar .combo .arrow { background: #f4f4f4; }
.zoom { width: 69px; margin-left: 1px; }
.font { width: 153px; margin-left: 1px; }
.size { width: 47px; margin-left: 2px; }
.more { flex: none; flex-direction: column; justify-content: flex-end; gap: 2px; width: 12px; height: 25px; margin: 0 0 0 2px; padding-bottom: 3px; background: linear-gradient(#e0e0e0, #b8b8b8); border-radius: 0 3px 3px 0; }
.more::before { content: ""; width: 6px; height: 1px; background: #000; }
.more::after { content: ""; border: 3px solid transparent; border-top-color: #000; border-bottom: 0; }

.formula { flex: none; display: flex; height: 20px; padding-left: 2px; background: #e6e6e6; border-bottom: 1px solid #9a9a9a; }
.namebox { width: 106px; height: 18px; background: #fff; text-align: center; font-size: 15px; }
.formula .dd { width: 16px; }
.fx { width: 20px; margin-left: 43px; font: italic 13px/18px "Liberation Serif", serif; }
.fbar { flex: 1; min-width: 0; background: #fff; }

/* scroll bars */
.vscroll { flex: none; display: flex; flex-direction: column; width: 14px; background: linear-gradient(90deg, #c6c6c6, #f4f4f4 70%); }
.sb { flex: none; width: 14px; height: 14px; border: 1px solid #c6c6c6; background: linear-gradient(#fafafa, #dcdcdc); }
.sb::before { content: ""; border: 3px solid transparent; }
.up::before { border-bottom-color: #555; border-top: 0; }
.down::before { border-top-color: #555; border-bottom: 0; }
.left::before { border-right-color: #555; border-left: 0; }
.right::before { border-left-color: #555; border-right: 0; }
.thumb { display: flex; align-items: center; justify-content: center; border: 1px solid #7791b1; box-shadow: inset 0 0 0 1px #f3f7fc; }
.vscroll .thumb { margin: 0 1px; background: linear-gradient(90deg, #dfe9f4, #abc0da); }
.vscroll .thumb::before { content: ""; width: 4px; height: 5px; background: repeating-linear-gradient(#6b84a3 0 1px, transparent 1px 2px); }

/* work area */
.work { position: relative; z-index: 1; flex: 1; min-height: 0; display: flex; justify-content: flex-end; background: #c8c8c8; border-left: 2px solid #dedede; }
.main-scroll { margin-right: 2px; width: 13px; }
.main-scroll .sb { width: 13px; }
.main-scroll .thumb { flex: 1; }

.fields { position: absolute; left: 172px; top: 164px; width: 188px; padding: 0 7px 8px; background: #f1f1f1; }
.fields-head { display: flex; align-items: center; height: 17px; margin: 0 -7px; padding: 0 4px 0 2px; background: #e4e4e4; }
.fields-head h2 { flex: 1; font-weight: 700; font-size: 13px; line-height: 16px; white-space: nowrap; }
.fields-head .dd::before { border-width: 4px 4px 0; }
.close { width: 10px; margin-left: 6px; }
.close svg { width: 9px; height: 9px; stroke: #000; stroke-width: 1.500; }
.fields p { padding: 2px 0 11px; }
.listbox { display: flex; border: 1px solid #000; background: #fff; overflow: hidden; }
.tree { flex: 1; }
.fields .listbox { height: 221px; }
.fields .tree { margin-left: 12px; border-left: 1px dotted #c0c0c0; }
.fields .tree li { display: flex; align-items: center; height: 20px; font-size: 16px; line-height: 20px; }
.fields .tree .used { font-weight: 700; font-size: 17px; }
.fields .tree li::before { content: ""; width: 9px; margin-right: 2px; border-top: 1px dotted #c0c0c0; }
.fico { width: 12px; height: 13px; margin: 4px 2px 0 0; }
.fields .tree span { padding: 0 2px; }
.picked span { background: #e6e6e6; }
.fields .thumb { height: 146px; }
.rest { flex: 1; }
.fields-foot { display: flex; align-items: center; justify-content: space-between; margin-top: 11px; padding-left: 2px; }
.push { height: 20px; border: 1px solid #c0c0c0; background: linear-gradient(#fdfdfd, #dedede); box-shadow: inset 0 0 0 1px #f8f8f8; }
.hot { border-color: #6f8cb3; background: linear-gradient(#edf2f8, #b9c9de); }
.fields .push { width: 51px; }
.axis { width: 114px; height: 21px; border: 1px solid #ababab; }
.axis select { padding: 0 3px; }
.axis .arrow { width: 13px; margin: 1px; border: 1px solid #c0c0c0; background: linear-gradient(#fafafa, #d8d8d8); color: #444; }

.sheet { position: absolute; left: 413px; top: 192px; width: 596px; padding: 5px 6px 4px 4px; background: #fff; }
.h { position: absolute; width: 6px; height: 6px; background: #000; }
.tl, .tm, .tr { top: 0; }
.ml, .mr { top: 180px; }
.bl, .br { bottom: 0; }
.tl, .ml, .bl { left: 0; }
.tr, .mr, .br { right: 0; }
.tm { left: 295px; }
.pagefields { display: flex; height: 17px; font: 11px/15px "Liberation Sans", "Noto Sans CJK SC", sans-serif; }
.pagefields .combo { border: 1px solid #000; }
.pf { width: 15px; border: 1px solid #000; background: #e4e4e4; font-size: 10px; }
.pf + .combo .arrow, .cf .arrow { background: linear-gradient(#f6f6f6, #c8c8c8); border-left: 1px solid #bbb; }
.combo select { padding: 0 2px; }
.year { width: 45px; }
.month { width: 27px; }
.pagefields .arrow { width: 14px; }
.chart-title { margin-top: 13px; font-size: 10px; line-height: 16px; text-align: center; }
.measure { width: 59px; height: 17px; margin: 27px 0 0 45px; border: 1px solid #000; background: #e4e4e4; font-size: 10px; }
.chart { display: flex; margin-top: 1px; font: 11px/16px "Liberation Sans", sans-serif; }
.yaxis { width: 45px; margin-top: -8px; padding-right: 8px; text-align: right; }
.plot { flex: 1; }
.bars { display: block; width: 100%; height: 129px; shape-rendering: crispEdges; }
.cats { width: 100%; table-layout: fixed; border-collapse: collapse; line-height: 15px; text-align: center; }
.cats td { height: 23px; padding: 7px 0 1px; border: solid #000; border-width: 0 1px; white-space: nowrap; }
.legend { width: 99px; margin: 45px 0 0 4px; font: 10px/14px "Noto Sans CJK SC", sans-serif; }
.drop { height: 19px; border: 2px solid #0000c8; text-align: center; color: #999; white-space: nowrap; }
.key { display: flex; align-items: center; gap: 3px; height: 16px; margin-top: 1px; margin-left: 1px; padding-left: 3px; border: 1px solid #000; }
.key i { width: 6px; height: 6px; border: 1px solid #000; background: #8080ff; }
.catfields { display: flex; width: 235px; margin: 6px 0 0 146px; }
.cf { flex: 1; justify-content: space-between; height: 17px; padding-left: 2px; border: 1px solid #000; background: #e4e4e4; font-size: 10px; }
.cf.day { flex: none; width: 32px; }
.cf .arrow { width: 13px; align-self: stretch; }

.popup { position: absolute; left: 627px; top: 551px; width: 191px; padding: 8px; border: 1px solid #d2d2cc; border-right-color: #a8a8a4; border-bottom-color: #a8a8a4; background: #ececea; box-shadow: inset 1px 1px #fff; }
.popup .listbox { height: 179px; }
.popup .tree { margin-left: 12px; border-left: 1px dotted #c0c0c0; }
.popup .tree li, .popup label { display: flex; align-items: center; height: 18px; font: 14px/16px "Liberation Sans", sans-serif; }
.popup .tree li::before { content: ""; width: 8px; border-top: 1px dotted #c0c0c0; }
.popup input { appearance: none; display: flex; align-items: center; justify-content: center; width: 11px; height: 11px; margin: 4px 2px 0 1px; border: 1px dotted #555; }
.popup input:checked::before { content: ""; width: 8px; height: 7px; background: #000; clip-path: polygon(0 30%, 38% 62%, 100% 0, 100% 36%, 38% 100%, 0 64%); }
.popup .cjk { font: 15px/16px "Noto Sans CJK SC", sans-serif; }
.popup .sel { align-self: stretch; padding: 0 4px 0 1px; margin-left: -1px; line-height: 18px; background: #47617e; color: #fff; outline: 1px dotted #000; outline-offset: -1px; }
.popup .thumb { height: 9px; margin-top: 1px; }
.popup .thumb::before { display: none; }
.popup-foot { display: flex; gap: 8px; margin: 3px 0 1px; }
.popup-foot .push { flex: 1; }
.resize { position: absolute; right: 2px; bottom: 2px; width: 9px; height: 9px; }
.cursor { position: absolute; left: 678px; top: 516px; width: 13px; height: 21px; }

/* sheet tabs, status */
.tabs { flex: none; display: flex; height: 15px; padding-left: 2px; }
.tabnav { display: flex; width: 56px; justify-content: space-between; }
.tabnav svg { width: 8px; height: 8px; margin: 0 2px; }
.slash { flex: none; width: 8px; height: 14px; fill: none; stroke: #000; }
.slash .bg { fill: #fff; stroke: none; }
.tab { height: 14px; line-height: 14px; padding: 0 1px; }
.active { padding: 0 2px; background: #fff; font: 10px/14px "Liberation Mono", monospace; text-decoration: underline; }
.hscroll { display: flex; width: 39%; height: 14px; margin: 0 16px 0 auto; border-left: 2px solid #333; background: #ddd; }
.hscroll .thumb { flex: 1; margin: 1px 0; background: linear-gradient(#e4edf6, #abc0da); }
.hscroll .thumb::before { content: ""; width: 5px; height: 4px; background: repeating-linear-gradient(90deg, #6b84a3 0 1px, transparent 1px 2px); }
.status { flex: none; display: flex; justify-content: space-between; height: 19px; padding: 2px 132px 0 11px; }
.num { color: #a5a5a5; }

/* task bar */
.taskbar { position: relative; flex: none; display: flex; align-items: center; height: 24px; padding-top: 1px; border-top: 1px solid #000; border-bottom: 2px solid #14202f; background: linear-gradient(#5b6f88, #41566f 40%, #2f455f); color: #fff; font-family: "Noto Sans", "Noto Sans CJK SC", sans-serif; }
.taskbar button, .tray { position: relative; }
.start { width: 36px; margin-left: 3px; justify-content: flex-start; }
.flag { width: 34px; height: 20px; }
.gear { width: 18px; height: 18px; margin-left: -18px; }
.quick { display: flex; gap: 7px; padding: 0 11px 0 10px; }
.task { flex: none; width: 160px; height: 20px; padding: 0 10px; gap: 4px; justify-content: flex-start; }
.task span { font-size: 12px; }
.task.on { width: 151px; border: 1px solid #0b131e; border-left-color: #6b7f97; background: linear-gradient(#2c405a, #4a607b); padding: 0 9px; }
.task.on span { font: 11px/16px Roboto, sans-serif; }
.task .gear { position: absolute; right: -5px; bottom: -1px; }
.tray { display: flex; align-items: center; gap: 6px; width: 180px; margin-left: auto; padding-right: 5px; }
.tray .ico { margin-right: 16px; }
.tray span { margin-left: auto; }
.dot { width: 12px; height: 12px; border-radius: 50%; }
.o { background: #f09030; }
.g { background: #30b030; }

.mark { position: absolute; z-index: 2; right: 7px; bottom: 5px; width: 148px; padding: 4px 10px 2px; background: rgba(255, 255, 255, .86); color: #4763c4; white-space: nowrap; }
.mark strong { display: block; font: 500 20px/24px "Noto Sans CJK SC", sans-serif; text-align-last: justify; }
.mark span { font: 600 12px/15px "Noto Sans", sans-serif; color: #35519f; display: block; }
```
